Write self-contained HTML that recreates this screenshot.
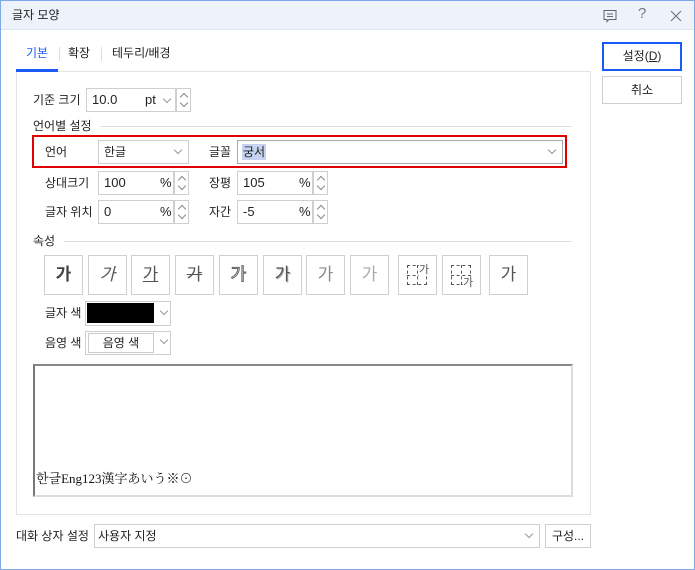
<!DOCTYPE html>
<html><head><meta charset="utf-8"><style>
*{box-sizing:border-box;margin:0;padding:0}
body{width:695px;height:570px;background:#fff;font-family:"Liberation Sans","Noto Sans CJK KR",sans-serif;font-size:12px;color:#222;position:relative;overflow:hidden}
.a{position:absolute}
.win{left:0;top:0;width:695px;height:570px;border:1px solid #7fa7e8}
.title{left:1px;top:1px;width:693px;height:29px;background:#eef3fb;border-bottom:1px solid #dde6f3}
.box{border:1px solid #cfcfcf;background:#fff}
.lbl{white-space:nowrap;line-height:14px}
.chev{width:6px;height:6px;border-right:1px solid #999;border-bottom:1px solid #999;transform:rotate(45deg)}
.spin{border:1px solid #cfcfcf;background:#fff}
.up,.dn{position:absolute;left:4px;width:6px;height:6px;border-left:1px solid #888;border-top:1px solid #888}
.up{top:5px;transform:rotate(45deg)}
.dn{bottom:5px;transform:rotate(225deg)}
.ab{border:1px solid #cfcfcf;background:#fff;width:39px;height:40px;text-align:center;line-height:38px;font-size:17px;color:#555}
.dg{position:absolute;border:1px dashed #555;width:20px;height:20px}
.sg{position:absolute;font-size:11px;line-height:12px;background:#fff;color:#555}
</style></head><body>
<div class="a win"></div>
<div class="a title"></div>
<div class="a lbl" style="left:12px;top:8px;font-size:12px">글자 모양</div>
<svg class="a" style="left:602px;top:8px" width="16" height="16"><path d="M2 2.5h12v9H7l-2 2v-2H2z" fill="none" stroke="#666"/><path d="M5 6h6M5 8.5h6" stroke="#666"/></svg>
<div class="a lbl" style="left:638px;top:7px;font-size:15px;color:#777">?</div>
<svg class="a" style="left:669px;top:9px" width="14" height="14"><path d="M2 2L12 12M12 2L2 12" stroke="#777" stroke-width="1.2"/></svg>

<div class="a lbl" style="left:26px;top:46px;color:#1a5af5">기본</div>
<div class="a" style="left:59px;top:47px;width:1px;height:14px;background:#ddd"></div>
<div class="a lbl" style="left:68px;top:46px">확장</div>
<div class="a" style="left:101px;top:47px;width:1px;height:14px;background:#ddd"></div>
<div class="a lbl" style="left:112px;top:46px">테두리/배경</div>
<div class="a" style="left:16px;top:71px;width:575px;height:444px;border:1px solid #e3e3e3"></div>
<div class="a" style="left:16px;top:69px;width:42px;height:3px;background:#1a5af5"></div>

<div class="a" style="left:602px;top:42px;width:80px;height:29px;border:2px solid #1a5af5;text-align:center;line-height:25px">설정(<u>D</u>)</div>
<div class="a" style="left:602px;top:76px;width:80px;height:28px;border:1px solid #cfcfcf;text-align:center;line-height:26px">취소</div>

<div class="a lbl" style="left:33px;top:93px">기준 크기</div>
<div class="a box" style="left:86px;top:88px;width:90px;height:24px"></div>
<div class="a lbl" style="left:92px;top:93px;font-size:13px">10.0</div>
<div class="a lbl" style="left:145px;top:93px;font-size:13px">pt</div>
<div class="a chev" style="left:164px;top:96px"></div>
<div class="a spin" style="left:176px;top:88px;width:15px;height:24px"><div class="up"></div><div class="dn"></div></div>

<div class="a lbl" style="left:33px;top:119px">언어별 설정</div>
<div class="a" style="left:100px;top:126px;width:472px;height:1px;background:#ddd"></div>
<div class="a" style="left:32px;top:135px;width:535px;height:33px;border:2px solid #e00000"></div>
<div class="a lbl" style="left:45px;top:145px">언어</div>
<div class="a box" style="left:98px;top:140px;width:91px;height:24px"></div>
<div class="a lbl" style="left:104px;top:145px">한글</div>
<div class="a chev" style="left:175px;top:147px"></div>
<div class="a lbl" style="left:209px;top:145px">글꼴</div>
<div class="a" style="left:237px;top:140px;width:326px;height:24px;border:1px solid #aaa"></div>
<div class="a lbl" style="left:242px;top:144px;background:#c6d3f0;padding:1px 1px">궁서</div>
<div class="a chev" style="left:549px;top:147px"></div>

<div class="a lbl" style="left:45px;top:176px">상대크기</div>
<div class="a box" style="left:98px;top:171px;width:76px;height:24px"></div>
<div class="a lbl" style="left:104px;top:176px;font-size:13px">100</div>
<div class="a lbl" style="left:160px;top:176px;font-size:13px">%</div>
<div class="a spin" style="left:174px;top:171px;width:15px;height:24px"><div class="up"></div><div class="dn"></div></div>
<div class="a lbl" style="left:209px;top:176px">장평</div>
<div class="a box" style="left:237px;top:171px;width:76px;height:24px"></div>
<div class="a lbl" style="left:243px;top:176px;font-size:13px">105</div>
<div class="a lbl" style="left:299px;top:176px;font-size:13px">%</div>
<div class="a spin" style="left:313px;top:171px;width:15px;height:24px"><div class="up"></div><div class="dn"></div></div>

<div class="a lbl" style="left:45px;top:205px">글자 위치</div>
<div class="a box" style="left:98px;top:200px;width:76px;height:24px"></div>
<div class="a lbl" style="left:104px;top:205px;font-size:13px">0</div>
<div class="a lbl" style="left:160px;top:205px;font-size:13px">%</div>
<div class="a spin" style="left:174px;top:200px;width:15px;height:24px"><div class="up"></div><div class="dn"></div></div>
<div class="a lbl" style="left:209px;top:205px">자간</div>
<div class="a box" style="left:237px;top:200px;width:76px;height:24px"></div>
<div class="a lbl" style="left:243px;top:205px;font-size:13px">-5</div>
<div class="a lbl" style="left:299px;top:205px;font-size:13px">%</div>
<div class="a spin" style="left:313px;top:200px;width:15px;height:24px"><div class="up"></div><div class="dn"></div></div>

<div class="a lbl" style="left:33px;top:234px">속성</div>
<div class="a" style="left:64px;top:241px;width:508px;height:1px;background:#ddd"></div>
<div class="a ab" style="left:44px;top:255px;font-weight:bold;color:#444">가</div>
<div class="a ab" style="left:88px;top:255px;font-style:italic">가</div>
<div class="a ab" style="left:131px;top:255px;text-decoration:underline">가</div>
<div class="a ab" style="left:175px;top:255px;text-decoration:line-through">가</div>
<div class="a ab" style="left:219px;top:255px;color:#fff;-webkit-text-stroke:1px #666">가</div>
<div class="a ab" style="left:263px;top:255px;text-shadow:1px 1px #aaa">가</div>
<div class="a ab" style="left:306px;top:255px;color:#888">가</div>
<div class="a ab" style="left:350px;top:255px;color:#aaa">가</div>
<div class="a ab" style="left:398px;top:255px"><div class="dg" style="left:8px;top:9px"></div><div class="a" style="left:8px;top:19px;width:20px;border-top:1px dashed #555"></div><div class="a" style="left:18px;top:9px;height:20px;border-left:1px dashed #555"></div><span class="sg" style="left:20px;top:8px">가</span></div>
<div class="a ab" style="left:442px;top:255px"><div class="dg" style="left:8px;top:9px"></div><div class="a" style="left:8px;top:19px;width:20px;border-top:1px dashed #555"></div><div class="a" style="left:18px;top:9px;height:20px;border-left:1px dashed #555"></div><span class="sg" style="left:20px;top:21px">가</span></div>
<div class="a ab" style="left:489px;top:255px">가</div>

<div class="a lbl" style="left:45px;top:306px">글자 색</div>
<div class="a box" style="left:85px;top:301px;width:86px;height:25px"></div>
<div class="a" style="left:87px;top:303px;width:67px;height:20px;background:#000"></div>
<div class="a chev" style="left:161px;top:308px"></div>
<div class="a lbl" style="left:45px;top:336px">음영 색</div>
<div class="a box" style="left:85px;top:331px;width:86px;height:24px"></div>
<div class="a" style="left:88px;top:333px;width:66px;height:20px;border:1px solid #ccc;text-align:center;line-height:18px">음영 색</div>
<div class="a chev" style="left:161px;top:337px"></div>

<div class="a" style="left:33px;top:364px;width:540px;height:133px;border:2px solid #ddd;border-left:2px solid #777;border-top:2px solid #888"></div>
<div class="a lbl" style="left:36px;top:472px;font-family:'Liberation Serif','Noto Serif CJK SC',serif;font-size:13px;color:#111">한글Eng123漢字あいう※⊙</div>

<div class="a lbl" style="left:16px;top:529px">대화 상자 설정</div>
<div class="a box" style="left:94px;top:524px;width:446px;height:24px"></div>
<div class="a lbl" style="left:98px;top:529px">사용자 지정</div>
<div class="a chev" style="left:526px;top:531px"></div>
<div class="a box" style="left:545px;top:524px;width:46px;height:24px;text-align:center;line-height:22px">구성...</div>
</body></html>
